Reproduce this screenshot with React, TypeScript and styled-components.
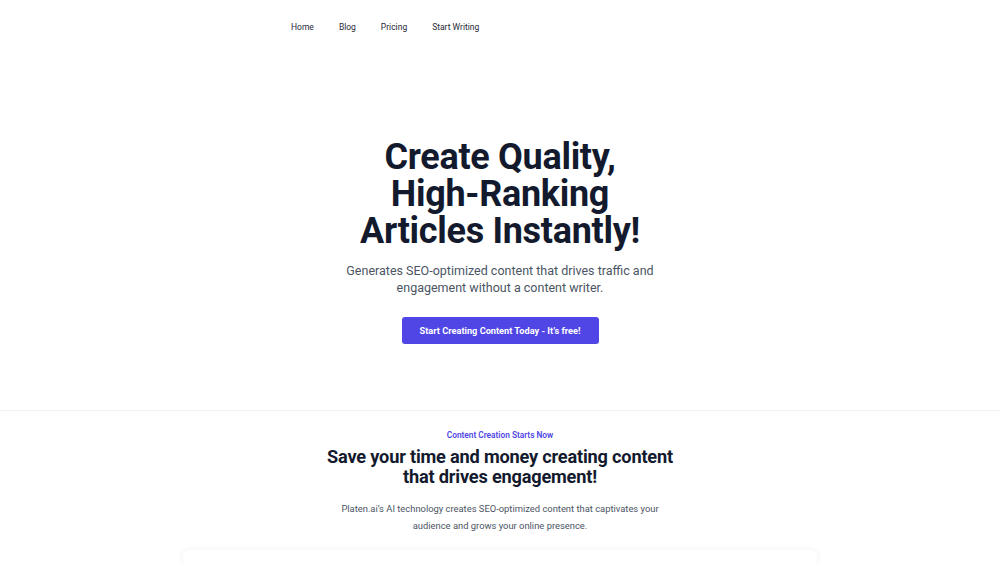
import styled, { createGlobalStyle } from 'styled-components';

const GlobalStyle = createGlobalStyle`
	* { box-sizing: border-box; }
	body {
		margin: 0;
		background: #fff;
		font-family: Roboto, "Liberation Sans", sans-serif;
		color: #111827;
	}
`;

const Page = styled.div`
	width: 100%;
	height: 563px;
	overflow: hidden;
`;

const Nav = styled.nav`
	display: flex;
	gap: 25px;
	padding: 21px 0 0 291px;
	height: 40px;
`;

const NavLink = styled.a`
	font-size: 8.5px;
	color: #1f2937;
	text-decoration: none;
	line-height: 12px;
`;

const Hero = styled.section`
	display: flex;
	flex-direction: column;
	align-items: center;
	padding: 99px 0 66px;
	border-bottom: 1px solid #f1f2f4;
`;

const Title = styled.h1`
	margin: 0;
	width: 300px;
	text-align: center;
	font-size: 36px;
	line-height: 37px;
	font-weight: 700;
	letter-spacing: -0.3px;
	color: #141a2e;
`;

const Lead = styled.p`
	margin: 12px 0 0;
	width: 320px;
	text-align: center;
	font-size: 12.5px;
	line-height: 17px;
	color: #4b5563;
`;

const CtaButton = styled.a`
	margin-top: 21px;
	display: flex;
	align-items: center;
	justify-content: center;
	width: 197px;
	height: 27px;
	border-radius: 3px;
	background: #4f46e5;
	color: #fff;
	font-size: 9.2px;
	font-weight: 700;
	text-decoration: none;
`;

const Features = styled.section`
	display: flex;
	flex-direction: column;
	align-items: center;
	padding-top: 19px;
`;

const Eyebrow = styled.p`
	margin: 0;
	font-size: 8.3px;
	line-height: 10px;
	font-weight: 600;
	color: #4f46e5;
`;

const SectionTitle = styled.h2`
	margin: 7px 0 0;
	width: 360px;
	text-align: center;
	font-size: 18.2px;
	line-height: 20px;
	font-weight: 700;
	letter-spacing: -0.2px;
	color: #141a2e;
`;

const SectionText = styled.p`
	margin: 13px 0 0;
	width: 330px;
	text-align: center;
	font-size: 9.4px;
	line-height: 17px;
	color: #4b5563;
`;

const Card = styled.div`
	margin-top: 16px;
	width: 634px;
	height: 80px;
	background: #fff;
	border-radius: 6px;
	box-shadow: 0 0 6px rgba(0, 0, 0, 0.06);
`;

export default function App() {
	return (
		<Page>
			<GlobalStyle />
			<Nav>
				<NavLink href="#">Home</NavLink>
				<NavLink href="#">Blog</NavLink>
				<NavLink href="#">Pricing</NavLink>
				<NavLink href="#">Start Writing</NavLink>
			</Nav>
			<Hero>
				<Title>Create Quality, High-Ranking Articles Instantly!</Title>
				<Lead>
					Generates SEO-optimized content that drives traffic and engagement without a content writer.
				</Lead>
				<CtaButton href="#">Start Creating Content Today - It’s free!</CtaButton>
			</Hero>
			<Features>
				<Eyebrow>Content Creation Starts Now</Eyebrow>
				<SectionTitle>Save your time and money creating content that drives engagement!</SectionTitle>
				<SectionText>
					Platen.ai’s AI technology creates SEO-optimized content that captivates your audience and grows your online presence.
				</SectionText>
				<Card />
			</Features>
		</Page>
	);
}
